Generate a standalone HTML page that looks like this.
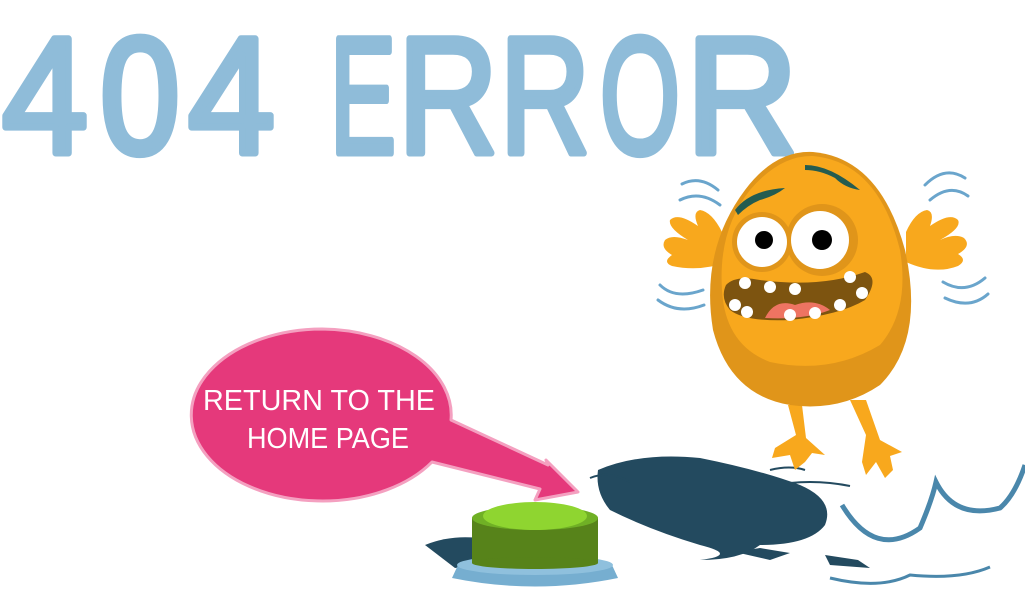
<!DOCTYPE html>
<html><head><meta charset="utf-8"><style>
html,body{margin:0;padding:0;background:#fff;width:1025px;height:592px;overflow:hidden}
svg{display:block}
</style></head><body>
<svg width="1025" height="592" viewBox="0 0 1025 592" xmlns="http://www.w3.org/2000/svg">
<g fill="#8fbcd9" stroke="#8fbcd9" stroke-width="7" stroke-linejoin="round" font-family="Liberation Sans, sans-serif" font-size="166">
<text x="2" y="153" textLength="86" lengthAdjust="spacingAndGlyphs">4</text>
<text x="100" y="153" textLength="80" lengthAdjust="spacingAndGlyphs">0</text>
<text x="188" y="153" textLength="87" lengthAdjust="spacingAndGlyphs">4</text>
<text x="330" y="153" textLength="66" lengthAdjust="spacingAndGlyphs">E</text>
<text x="398" y="153" textLength="100" lengthAdjust="spacingAndGlyphs">R</text>
<text x="500" y="153" textLength="90" lengthAdjust="spacingAndGlyphs">R</text>
<text x="600" y="153" textLength="80" lengthAdjust="spacingAndGlyphs">O</text>
<text x="686" y="153" textLength="112" lengthAdjust="spacingAndGlyphs">R</text>
</g>

<!-- shadows -->
<path d="M425 545 Q450 535 478 538 L478 565 L455 568 Z" fill="#234a5f"/>
<path d="M598 470 Q640 452 700 458 Q760 470 800 485 Q835 500 825 525 Q810 545 760 545 Q740 560 700 560 Q740 555 700 545 Q650 530 610 510 Q595 492 598 470 Z" fill="#234a5f"/>
<path d="M735 552 L760 548 L790 553 L770 560 Z M825 555 L858 560 L870 568 L830 565 Z" fill="#234a5f"/>
<path d="M590 478 Q610 470 630 482" fill="none" stroke="#234a5f" stroke-width="2"/>
<path d="M770 470 Q790 465 805 470 M790 483 Q820 480 850 486" fill="none" stroke="#234a5f" stroke-width="2"/>
<!-- right blue curves -->
<path d="M842 505 Q875 560 920 528 Q932 500 936 482 Q955 520 1000 508 Q1015 495 1025 465" fill="none" stroke="#4a87ab" stroke-width="5"/>
<path d="M830 578 Q880 590 910 575 Q960 580 990 567" fill="none" stroke="#4a87ab" stroke-width="3"/>

<!-- button -->
<path d="M458 565 L612 565 L618 578 Q535 595 452 578 Z" fill="#76aed0"/>
<ellipse cx="535" cy="565" rx="78" ry="10" fill="#8fc0dd"/>
<rect x="472" y="518" width="126" height="45" fill="#57831a"/>
<ellipse cx="535" cy="563" rx="63" ry="6" fill="#57831a"/>
<ellipse cx="535" cy="518" rx="63" ry="12" fill="#70b025"/>
<ellipse cx="535" cy="516" rx="52" ry="14" fill="#8fd530"/>

<!-- speech bubble -->
<path d="M322 329 A131 86 0 0 1 451 420 L548 465 L546 460 L578 492 L535 500 L540 489 L432 462 A131 86 0 1 1 322 329 Z" fill="#e5397b" stroke="#f4a0c0" stroke-width="3" stroke-linejoin="round"/>
<g fill="#fff" font-family="Liberation Sans, sans-serif" font-size="29">
<text x="203" y="410" textLength="232" lengthAdjust="spacingAndGlyphs">RETURN TO THE</text>
<text x="247" y="448" textLength="162" lengthAdjust="spacingAndGlyphs">HOME PAGE</text>
</g>

<!-- monster legs -->
<path d="M788 405 L796 435 L775 448 L772 458 L790 455 L795 470 L805 462 L812 453 L825 455 L806 438 L802 405 Z" fill="#f8a81d"/>
<path d="M850 400 L866 435 L862 462 L866 475 L876 462 L885 478 L893 470 L890 456 L902 452 L880 440 L866 400 Z" fill="#f8a81d"/>
<!-- hands -->
<path d="M728 262 Q700 272 672 266 Q662 262 672 255 Q660 248 665 240 Q672 234 688 240 Q668 228 670 220 Q678 212 698 226 Q692 212 700 210 Q712 212 722 232 Z" fill="#f8a81d"/>
<path d="M906 262 Q935 275 958 266 Q968 260 958 254 Q972 246 964 238 Q955 233 940 240 Q962 228 958 220 Q950 212 930 226 Q935 212 927 210 Q915 212 906 232 Z" fill="#f8a81d"/>
<!-- body -->
<path d="M813 152 Q880 158 905 250 Q925 340 880 385 Q840 412 790 405 Q730 395 713 330 Q700 250 745 190 Q775 150 813 152 Z" fill="#e0951a"/>
<path d="M813 156 Q878 162 900 250 Q910 310 880 345 Q830 375 770 362 Q725 345 722 290 Q718 230 750 190 Q780 155 813 156 Z" fill="#f8a81d"/>
<!-- brows -->
<path d="M735 210 Q750 190 785 188 Q775 196 760 200 Q748 205 738 215 Z" fill="#245c50"/>
<path d="M805 165 Q830 165 860 190 Q845 188 835 178 Q820 170 805 170 Z" fill="#245c50"/>
<!-- eyes -->
<circle cx="762" cy="242" r="30" fill="#e0951a"/>
<circle cx="822" cy="240" r="36" fill="#e0951a"/>
<circle cx="762" cy="242" r="25" fill="#fff"/>
<circle cx="820" cy="240" r="29" fill="#fff"/>
<circle cx="764" cy="240" r="9" fill="#000"/>
<circle cx="822" cy="240" r="10" fill="#000"/>
<!-- mouth -->
<path d="M726 285 Q735 275 760 280 Q820 288 865 272 Q880 278 865 300 Q840 315 790 320 Q745 322 730 310 Q720 298 726 285 Z" fill="#7d5410"/>
<path d="M765 318 Q775 298 795 305 Q815 298 830 310 Q805 320 765 318 Z" fill="#ee7462"/>
<g fill="#fff">
<circle cx="745" cy="283" r="6"/><circle cx="770" cy="287" r="6"/><circle cx="795" cy="289" r="6"/><circle cx="850" cy="277" r="6"/><circle cx="862" cy="293" r="6"/>
<circle cx="735" cy="305" r="6"/><circle cx="747" cy="312" r="6"/><circle cx="790" cy="315" r="6"/><circle cx="815" cy="313" r="6"/><circle cx="840" cy="305" r="6"/>
</g>
<!-- wiggle lines -->
<g fill="none" stroke="#6aa5cc" stroke-width="3" stroke-linecap="round">
<path d="M682 184 Q700 175 718 190"/><path d="M680 200 Q700 190 720 205"/>
<path d="M660 285 Q675 300 703 290"/><path d="M658 300 Q678 315 704 305"/>
<path d="M925 185 Q945 165 965 178"/><path d="M930 200 Q950 183 968 196"/>
<path d="M943 282 Q965 295 985 278"/><path d="M945 298 Q970 310 988 294"/>
</g>
</svg>
</body></html>
